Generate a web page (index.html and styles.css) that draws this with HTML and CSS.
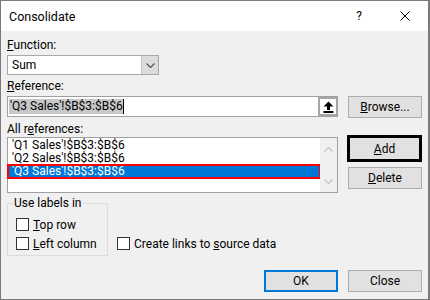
FILE: index.html
```html
<!DOCTYPE html>
<html>
<head>
  <meta charset="UTF-8">
  <title>Consolidate</title>
  <link rel="stylesheet" href="styles.css">
</head>
<body>
  <div class="window">
    <div class="titlebar">
      <span class="title">Consolidate</span>
      <span class="tb-button">?</span>
      <span class="tb-button">
        <svg width="10" height="10" viewBox="0 0 10 10"><path d="M0.5 0.5 L9.5 9.5 M9.5 0.5 L0.5 9.5" stroke="#000" stroke-width="1" fill="none"/></svg>
      </span>
    </div>

    <div class="content">
      <div class="label"><u>F</u>unction:</div>
      <div class="combo">
        <span class="combo-value">Sum</span>
        <span class="combo-button">
          <svg width="9" height="5" viewBox="0 0 9 5"><path d="M0.5 0.5 L4.5 4.5 L8.5 0.5" stroke="#555" stroke-width="1.2" fill="none"/></svg>
        </span>
      </div>

      <div class="label label-ref"><u>R</u>eference:</div>
      <div class="row">
        <div class="ref-input">
          <span class="ref-text"><span class="selection">'Q3 Sales'!$B$3:$B$6</span><span class="caret"></span></span>
          <span class="collapse-button">
            <svg width="11" height="12" viewBox="0 0 11 12">
              <path d="M5.5 0.5 L10.5 5.5 L7 5.5 L7 9 L4 9 L4 5.5 L0.5 5.5 Z" fill="#000"/>
              <rect x="0.5" y="10" width="10" height="2" fill="#000"/>
            </svg>
          </span>
        </div>
        <button class="btn"><u>B</u>rowse...</button>
      </div>

      <div class="row refs-row">
        <div class="refs-col">
          <div class="label">All r<u>e</u>ferences:</div>
          <div class="list">
            <div class="list-items">
              <div class="list-item">'Q1 Sales'!$B$3:$B$6</div>
              <div class="list-item">'Q2 Sales'!$B$3:$B$6</div>
              <div class="list-item selected">'Q3 Sales'!$B$3:$B$6</div>
            </div>
            <div class="scrollbar">
              <svg width="9" height="5" viewBox="0 0 9 5"><path d="M0.5 4.5 L4.5 0.5 L8.5 4.5" stroke="#c2c2c2" stroke-width="1.2" fill="none"/></svg>
              <svg width="9" height="5" viewBox="0 0 9 5"><path d="M0.5 0.5 L4.5 4.5 L8.5 0.5" stroke="#c2c2c2" stroke-width="1.2" fill="none"/></svg>
            </div>
          </div>
        </div>
        <div class="buttons-col">
          <button class="btn btn-add"><u>A</u>dd</button>
          <button class="btn"><u>D</u>elete</button>
        </div>
      </div>

      <div class="row options-row">
        <fieldset class="group">
          <legend>Use labels in</legend>
          <label class="check"><span class="box"></span><span><u>T</u>op row</span></label>
          <label class="check"><span class="box"></span><span><u>L</u>eft column</span></label>
        </fieldset>
        <label class="check check-links"><span class="box"></span><span>Create links to <u>s</u>ource data</span></label>
      </div>

      <div class="footer">
        <button class="btn btn-ok">OK</button>
        <button class="btn">Close</button>
      </div>
    </div>
  </div>
</body>
</html>
```

FILE: styles.css
```css
body {
  margin: 0;
  background-color: #ffffff;
  font-family: Roboto, "Liberation Sans", Arial, sans-serif;
  font-size: 12px;
  color: #000000;
}

.window {
  width: 430px;
  height: 300px;
  box-sizing: border-box;
  border: 1px solid #7a7a7a;
  border-right-width: 2px;
  background-color: #f0f0f0;
  display: flex;
  flex-direction: column;
}

.titlebar {
  height: 30px;
  background-color: #ffffff;
  display: flex;
  align-items: center;
}

.title {
  flex: 1;
  padding-left: 8px;
  font-size: 12.5px;
}

.tb-button {
  width: 46px;
  height: 30px;
  display: flex;
  align-items: center;
  justify-content: center;
}

.content {
  padding: 0 6px;
}

.label {
  line-height: 15px;
  height: 15px;
}

.content > .label:first-child {
  margin-top: 7px;
}

u {
  text-decoration-thickness: 1px;
  text-underline-offset: 1px;
}

/* combo box */
.combo {
  margin-top: 2px;
  width: 152px;
  height: 20px;
  box-sizing: border-box;
  border: 1px solid #a8a8a8;
  background-color: #ffffff;
  display: flex;
}

.combo-value {
  flex: 1;
  padding-left: 4px;
  line-height: 18px;
}

.combo-button {
  width: 16px;
  background-color: #dcdcdc;
  border-left: 1px solid #c4c4c4;
  display: flex;
  align-items: center;
  justify-content: center;
}

.label-ref {
  margin-top: 4px;
}

.row {
  display: flex;
  align-items: flex-start;
}

/* reference input */
.ref-input {
  margin-top: 2px;
  width: 331px;
  height: 21px;
  box-sizing: border-box;
  border: 1px solid #a0a0a0;
  background-color: #ffffff;
  display: flex;
}

.ref-text {
  flex: 1;
  padding: 2px 0 0 1px;
  line-height: 15px;
  display: flex;
  align-items: flex-start;
}

.selection {
  background-color: #c8c8c8;
  padding-left: 1px;
  height: 15px;
}

.caret {
  width: 1px;
  height: 15px;
  background-color: #000000;
}

.collapse-button {
  width: 16px;
  border: 2px solid #a6a6a6;
  border-right-width: 1px;
  background-color: #ffffff;
  display: flex;
  align-items: center;
  justify-content: center;
}

.btn {
  width: 74px;
  height: 22px;
  box-sizing: border-box;
  margin-left: 10px;
  padding: 0;
  border: 1px solid #adadad;
  background-color: #e1e1e1;
  font-family: Roboto, "Liberation Sans", Arial, sans-serif;
  font-size: 12px;
  color: #000000;
}

.row > .btn {
  margin-top: 2px;
}

/* references list */
.refs-row {
  margin-top: 4px;
}

.list {
  width: 331px;
  height: 56px;
  box-sizing: border-box;
  border: 1px solid #a0a0a0;
  background-color: #ffffff;
  display: flex;
}

.list-items {
  flex: 1;
  padding-top: 1px;
}

.list-item {
  height: 13px;
  line-height: 13px;
  padding-left: 4px;
}

.list-item.selected {
  background-color: #0078d7;
  color: #ffffff;
  outline: 2px solid #ff0000;
  outline-offset: -1px;
}

.scrollbar {
  width: 17px;
  background-color: #f0f0f0;
  display: flex;
  flex-direction: column;
  align-items: center;
  justify-content: space-between;
  padding: 9px 0 8px;
}

.buttons-col {
  display: flex;
  flex-direction: column;
  margin-top: 13px;
}

.buttons-col .btn {
  margin-left: 10px;
}

.btn-add {
  width: 75px;
  height: 27px;
  margin-bottom: 5px;
  border: 3px solid #000000;
  margin-left: 9px !important;
}

/* labels group */
.options-row {
  margin-top: 3px;
  align-items: flex-end;
}

.group {
  width: 101px;
  box-sizing: border-box;
  margin: 0;
  padding: 4px 0 2px 8px;
  border: 1px solid #dcdcdc;
}

.group legend {
  padding: 0 1px;
  margin-left: -3px;
  line-height: 15px;
}

.check {
  display: flex;
  align-items: center;
  height: 19px;
}

.box {
  width: 13px;
  height: 13px;
  box-sizing: border-box;
  border: 1px solid #333333;
  background-color: #ffffff;
  margin-right: 4px;
}

.check-links {
  margin-left: 9px;
  margin-bottom: 3px;
}

.footer {
  display: flex;
  justify-content: flex-end;
  margin-top: 14px;
}

.btn-ok {
  border: 2px solid #0078d7;
}
```
